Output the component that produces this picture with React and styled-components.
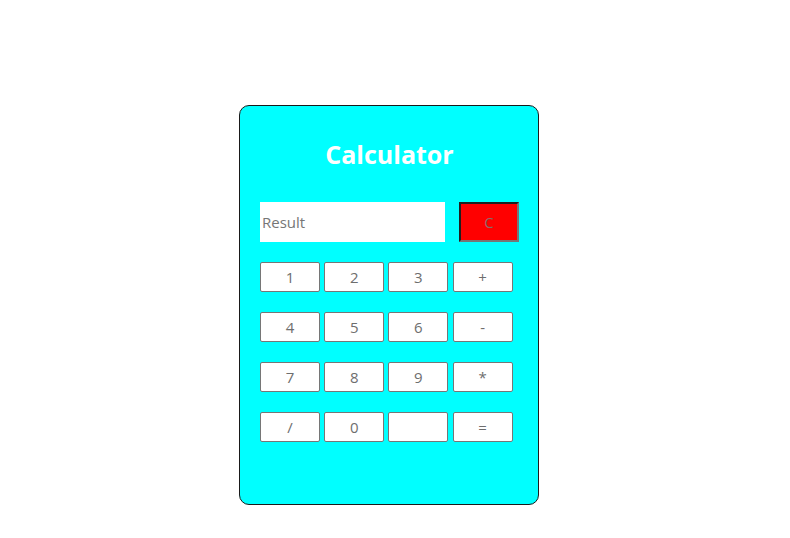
import React, { useState } from "react";
import styled, { createGlobalStyle } from "styled-components";

const GlobalStyle = createGlobalStyle`
  body {
    margin: 0;
    background: #ffffff;
    font-family: "Open Sans", "Noto Sans", sans-serif;
  }
`;

const Page = styled.div`
  padding: 105px 0 0 239px;
`;

const Card = styled.div`
  box-sizing: border-box;
  width: 300px;
  height: 400px;
  background-color: #00ffff;
  border: 1px solid #1a1a1a;
  border-radius: 10px;
  padding: 34px 19px 0 20px;
`;

const Title = styled.h1`
  margin: 0 0 34px;
  height: 28px;
  font-size: 25px;
  line-height: 28px;
  font-weight: 700;
  color: #ffffff;
  text-align: center;
`;

const TopRow = styled.div`
  display: flex;
  gap: 14px;
`;

const ResultInput = styled.input`
  box-sizing: border-box;
  width: 185px;
  height: 40px;
  border: none;
  outline: none;
  padding: 0 2px;
  font-family: inherit;
  font-size: 15px;
  color: #333;
  background: #ffffff;

  &::placeholder {
    color: #767676;
  }
`;

const ClearButton = styled.button`
  box-sizing: border-box;
  width: 60px;
  height: 40px;
  background-color: #ff0000;
  border-style: solid;
  border-width: 2px;
  border-color: #1f1f1f #767676 #767676 #1f1f1f;
  font-family: inherit;
  font-size: 15px;
  color: #8c6b6b;
  cursor: pointer;
`;

const Keys = styled.div`
  display: grid;
  grid-template-columns: repeat(4, 60px);
  column-gap: 4.2px;
  row-gap: 20px;
  margin-top: 20px;
`;

const Key = styled.button`
  box-sizing: border-box;
  height: 30px;
  padding: 0;
  background: #ffffff;
  border: 1px solid #767676;
  border-radius: 2px;
  font-family: inherit;
  font-size: 15px;
  color: #6e6e6e;
  cursor: pointer;
`;

const keys = ["1", "2", "3", "+", "4", "5", "6", "-", "7", "8", "9", "*", "/", "0", "", "="];

export default function App() {
  const [value, setValue] = useState("");

  const press = (k) => {
    if (k === "=") {
      try {
        // eslint-disable-next-line no-new-func
        setValue(String(Function(`return (${value})`)()));
      } catch (e) {
        setValue("Error");
      }
    } else {
      setValue(value + k);
    }
  };

  return (
    <Page>
      <GlobalStyle />
      <Card>
        <Title>Calculator</Title>
        <TopRow>
          <ResultInput
            placeholder="Result"
            value={value}
            onChange={(e) => setValue(e.target.value)}
          />
          <ClearButton onClick={() => setValue("")}>C</ClearButton>
        </TopRow>
        <Keys>
          {keys.map((k, i) => (
            <Key key={i} onClick={() => press(k)}>
              {k}
            </Key>
          ))}
        </Keys>
      </Card>
    </Page>
  );
}
